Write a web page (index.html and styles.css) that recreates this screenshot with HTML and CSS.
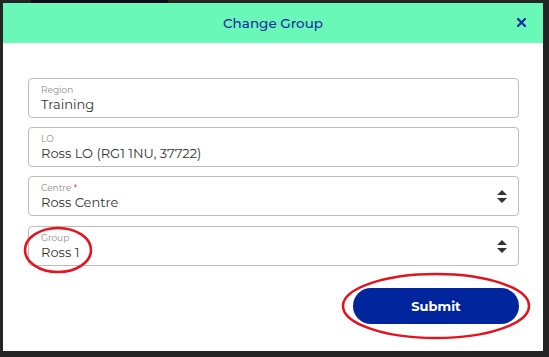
FILE: index.html
```html
<!DOCTYPE html>
<html lang="en">
<head>
  <meta charset="UTF-8" />
  <title>Change Group</title>
  <link rel="stylesheet" href="styles.css">
</head>
<body>
  <div class="topbar"><span class="tab"></span></div>
  <div class="modal">
    <div class="modal-head">
      <h2>Change Group</h2>
      <button class="close" title="Close">
        <svg width="9" height="9" viewBox="0 0 9 9"><path d="M1 1L8 8M8 1L1 8" stroke="#1b2ea0" stroke-width="2.2" stroke-linecap="square"/></svg>
      </button>
    </div>
    <div class="modal-body">
      <div class="field">
        <label>Region</label>
        <div class="value">Training</div>
      </div>
      <div class="field">
        <label>LO</label>
        <div class="value">Ross LO (RG1 1NU, 37722)</div>
      </div>
      <div class="field select">
        <label>Centre <span class="req">*</span></label>
        <div class="value">Ross Centre</div>
        <svg class="arrows" width="10" height="13" viewBox="0 0 10 13"><path d="M5 0L10 5H0Z M5 13L10 8H0Z" fill="#333"/></svg>
      </div>
      <div class="field select group">
        <label>Group</label>
        <div class="value">Ross 1</div>
        <svg class="arrows" width="10" height="13" viewBox="0 0 10 13"><path d="M5 0L10 5H0Z M5 13L10 8H0Z" fill="#333"/></svg>
        <svg class="mark mark-group" width="70" height="48" viewBox="0 0 70 48"><ellipse cx="35" cy="24" rx="33" ry="22" fill="none" stroke="#e2141e" stroke-width="2.6"/></svg>
      </div>
      <div class="actions">
        <button class="btn">Submit</button>
        <svg class="mark mark-submit" width="190" height="68" viewBox="0 0 190 68"><ellipse cx="95" cy="34" rx="93" ry="32" fill="none" stroke="#e2141e" stroke-width="2.6"/></svg>
      </div>
    </div>
  </div>
</body>
</html>
```

FILE: styles.css
```css
body {
  margin: 0;
  background: #252525;
  font-family: 'Montserrat', 'Inter', sans-serif;
  width: 549px;
  height: 357px;
  overflow: hidden;
}
.topbar {
  height: 3px;
  padding-left: 31px;
}
.tab {
  display: block;
  width: 137px;
  height: 3px;
  background: #050b18;
}
.modal {
  margin-left: 3px;
  width: 540px;
  height: 348px;
  background: #fff;
}
.modal-head {
  height: 40px;
  background: #6af8b8;
  display: flex;
  align-items: center;
  justify-content: center;
  position: relative;
}
.modal-head h2 {
  margin: 0;
  font-size: 13.5px;
  font-weight: 500;
  color: #1b2ea0;
}
.close {
  position: absolute;
  right: 17px;
  top: 15px;
  background: none;
  border: none;
  padding: 0;
  width: 9px;
  height: 9px;
  display: flex;
  cursor: pointer;
}
.modal-body {
  padding: 35px 24px 0 25px;
  display: flex;
  flex-direction: column;
  gap: 9px;
}
.field {
  position: relative;
  height: 40px;
  box-sizing: border-box;
  border: 1px solid #bdbdbd;
  border-radius: 4px;
  padding: 5px 12px 0 12px;
}
.field.group {
  margin-top: 1px;
}
.field label {
  display: block;
  font-size: 9px;
  color: #8c8c8c;
  line-height: 11px;
}
.req {
  color: #e2141e;
}
.field .value {
  font-size: 13px;
  color: #333;
  line-height: 17px;
  margin-top: 1px;
}
.arrows {
  position: absolute;
  right: 11px;
  top: 13px;
}
.mark {
  position: absolute;
  pointer-events: none;
}
.mark-group {
  left: -6px;
  top: -1px;
}
.actions {
  position: relative;
  display: flex;
  justify-content: flex-end;
  margin-top: 13px;
}
.btn {
  width: 166px;
  height: 36px;
  border: none;
  border-radius: 18px;
  background: #00259c;
  color: #fff;
  font-family: inherit;
  font-size: 13px;
  font-weight: 700;
  cursor: pointer;
}
.mark-submit {
  right: -12px;
  top: -16px;
}
```
